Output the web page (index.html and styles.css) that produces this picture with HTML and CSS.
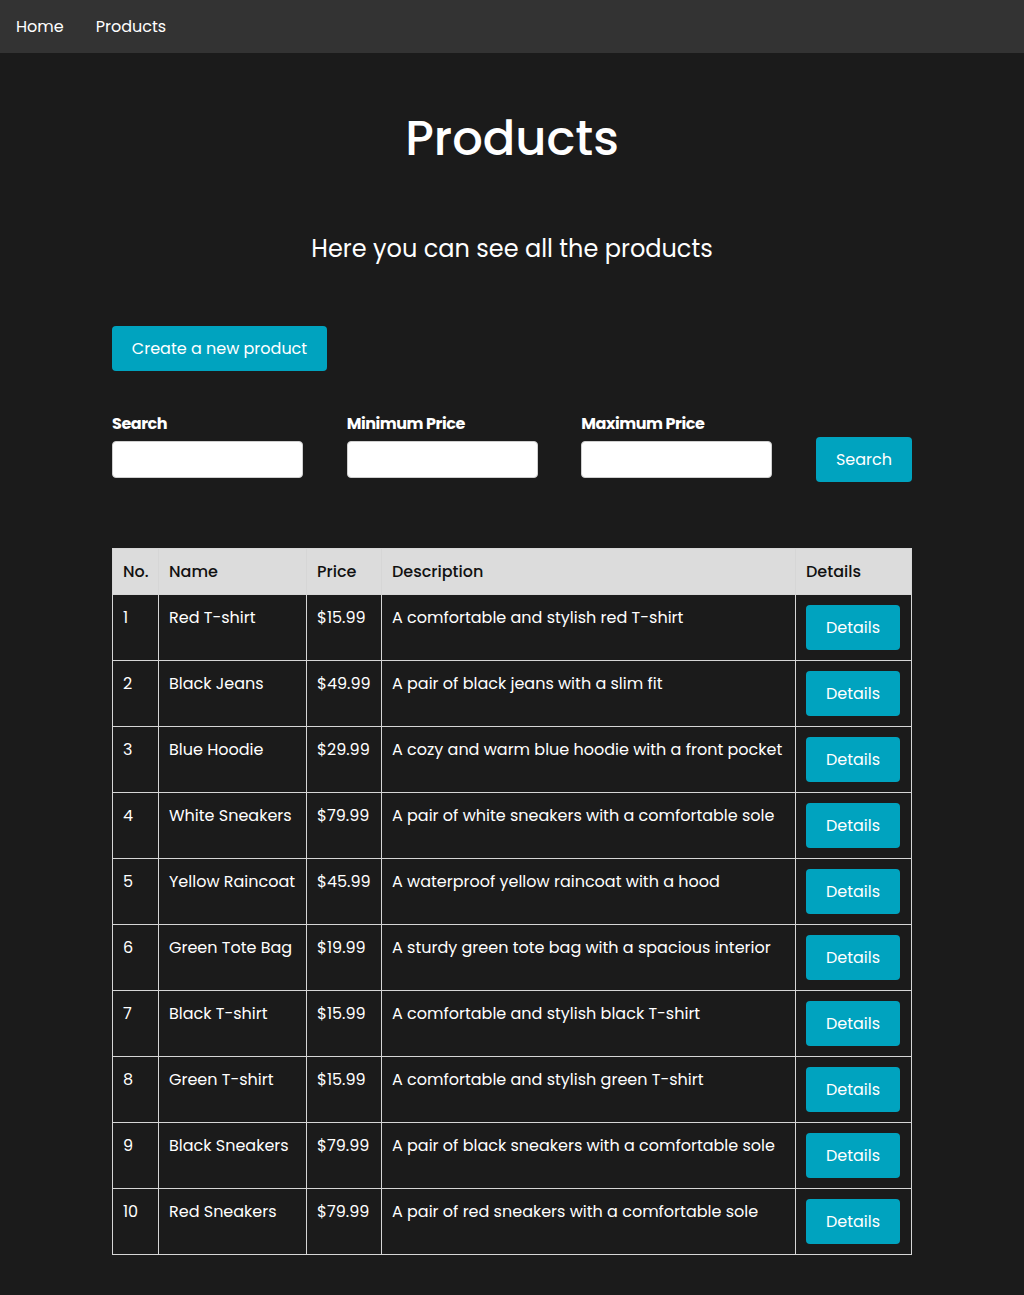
FILE: index.html
```html
<!DOCTYPE html>
<html lang="en">
<head>
<meta charset="utf-8">
<title>Products</title>
<link rel="stylesheet" href="styles.css">
</head>
<body>
<nav class="navbar">
  <a class="nav-link" href="#">Home</a>
  <a class="nav-link" href="#">Products</a>
</nav>
<main class="container">
  <h1 class="title">Products</h1>
  <p class="subtitle">Here you can see all the products</p>
  <div class="actions">
    <button class="btn btn-create">Create a new product</button>
  </div>
  <form class="filters">
    <label class="label" for="s">Search</label>
    <label class="label" for="mn">Minimum Price</label>
    <label class="label" for="mx">Maximum Price</label>
    <span></span>
    <input class="input" id="s" type="text">
    <input class="input" id="mn" type="text">
    <input class="input" id="mx" type="text">
    <button class="btn btn-search" type="button">Search</button>
  </form>
  <table class="table">
    <thead>
      <tr>
        <th class="c-no">No.</th>
        <th class="c-name">Name</th>
        <th class="c-price">Price</th>
        <th class="c-desc">Description</th>
        <th class="c-det">Details</th>
      </tr>
    </thead>
    <tbody>
      <tr><td>1</td><td>Red T-shirt</td><td>$15.99</td><td>A comfortable and stylish red T-shirt</td><td><button class="btn btn-details">Details</button></td></tr>
      <tr><td>2</td><td>Black Jeans</td><td>$49.99</td><td>A pair of black jeans with a slim fit</td><td><button class="btn btn-details">Details</button></td></tr>
      <tr><td>3</td><td>Blue Hoodie</td><td>$29.99</td><td>A cozy and warm blue hoodie with a front pocket</td><td><button class="btn btn-details">Details</button></td></tr>
      <tr><td>4</td><td>White Sneakers</td><td>$79.99</td><td>A pair of white sneakers with a comfortable sole</td><td><button class="btn btn-details">Details</button></td></tr>
      <tr><td>5</td><td>Yellow Raincoat</td><td>$45.99</td><td>A waterproof yellow raincoat with a hood</td><td><button class="btn btn-details">Details</button></td></tr>
      <tr><td>6</td><td>Green Tote Bag</td><td>$19.99</td><td>A sturdy green tote bag with a spacious interior</td><td><button class="btn btn-details">Details</button></td></tr>
      <tr><td>7</td><td>Black T-shirt</td><td>$15.99</td><td>A comfortable and stylish black T-shirt</td><td><button class="btn btn-details">Details</button></td></tr>
      <tr><td>8</td><td>Green T-shirt</td><td>$15.99</td><td>A comfortable and stylish green T-shirt</td><td><button class="btn btn-details">Details</button></td></tr>
      <tr><td>9</td><td>Black Sneakers</td><td>$79.99</td><td>A pair of black sneakers with a comfortable sole</td><td><button class="btn btn-details">Details</button></td></tr>
      <tr><td>10</td><td>Red Sneakers</td><td>$79.99</td><td>A pair of red sneakers with a comfortable sole</td><td><button class="btn btn-details">Details</button></td></tr>
    </tbody>
  </table>
</main>
</body>
</html>
```
FILE: styles.css
```css
* { box-sizing: border-box; }

html, body {
  margin: 0;
  padding: 0;
  background: #1b1b1b;
  color: #ffffff;
  font-family: Poppins, "Open Sans", "Noto Sans", sans-serif;
  font-size: 16px;
}

.navbar {
  height: 53px;
  background: #333333;
  display: flex;
  align-items: center;
  gap: 32px;
  padding: 0 16px;
}

.nav-link {
  color: #ffffff;
  text-decoration: none;
  font-size: 16px;
}

.container {
  width: 800px;
  margin: 0 auto;
  padding-bottom: 40px;
}

.title {
  margin: 55px 0 0;
  font-size: 48px;
  line-height: 62px;
  font-weight: 500;
  text-align: center;
}

.subtitle {
  margin: 61px 0 0;
  font-size: 24px;
  line-height: 36px;
  text-align: center;
}

.actions {
  margin-top: 59px;
  display: flex;
}

.btn {
  font-family: inherit;
  font-size: 16px;
  color: #ffffff;
  background: #00a3bf;
  border: none;
  border-radius: 4px;
  height: 45px;
  cursor: pointer;
}

.btn-create {
  width: 215px;
  padding: 0;
}

.filters {
  margin-top: 40px;
  display: grid;
  grid-template-columns: 191px 191px 191px 96px;
  grid-template-rows: 24px 45px;
  justify-content: space-between;
  row-gap: 2px;
}

.label {
  font-weight: 700;
  font-size: 16px;
  line-height: 24px;
  letter-spacing: -0.45px;
  padding-top: 1px;
}

.input {
  height: 37px;
  align-self: center;
  border: 1px solid #cfcfcf;
  border-radius: 4px;
  background: #ffffff;
  font-family: inherit;
  font-size: 16px;
}

.btn-search {
  width: 96px;
  padding: 0;
}

.table {
  margin-top: 66px;
  width: 799px;
  border-collapse: collapse;
  table-layout: fixed;
}

.table th,
.table td {
  border: 1px solid #d6d6d6;
  padding: 10px 10px;
  text-align: left;
  vertical-align: top;
  font-size: 16px;
  line-height: 26px;
  white-space: nowrap;
}

.table th {
  background: #dcdcdc;
  color: #111111;
  font-weight: 500;
  line-height: 24px;
  padding: 10.5px 10px;
  vertical-align: middle;
}

.c-no { width: 46px; }
.c-name { width: 148px; }
.c-price { width: 75px; }
.c-desc { width: 414px; }
.c-det { width: 116px; }

.btn-details {
  width: 94px;
  display: block;
}
```
